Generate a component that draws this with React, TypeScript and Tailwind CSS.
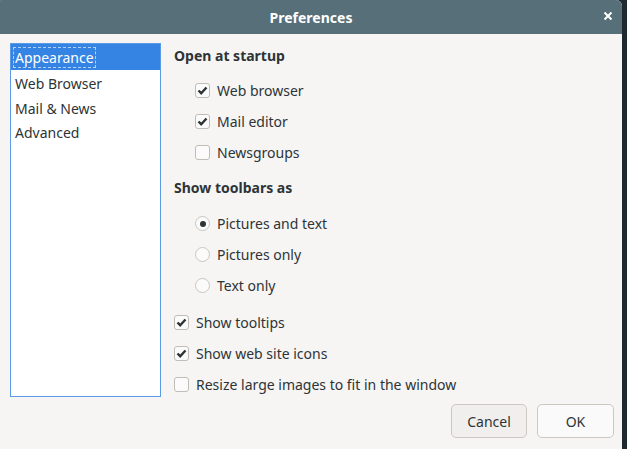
import React from "react";

function Check({ checked }: { checked: boolean }) {
  return (
    <span className="w-[15px] h-[15px] rounded-[3px] border border-[#c0bdb8] bg-[#fbfbfb] flex items-center justify-center shrink-0">
      {checked && (
        <svg width="11" height="11" viewBox="0 0 11 11">
          <path d="M1.5 5.5 L4.2 8.2 L9.5 2.5" fill="none" stroke="#2e3436" strokeWidth="2.4" />
        </svg>
      )}
    </span>
  );
}

function Radio({ checked }: { checked: boolean }) {
  return (
    <span className="w-[15px] h-[15px] rounded-full border border-[#c9c6c2] bg-[#fbfbfb] flex items-center justify-center shrink-0">
      {checked && <span className="w-[6px] h-[6px] rounded-full bg-[#2e3436]" />}
    </span>
  );
}

function Row({ children, label, indent }: { children: React.ReactNode; label: string; indent?: boolean }) {
  return (
    <div className={`flex items-center gap-[7px] h-[31px] ${indent ? "pl-[21px]" : ""}`}>
      {children}
      <span>{label}</span>
    </div>
  );
}

export default function App() {
  return (
    <div className="w-[627px] h-[449px] bg-[#1f2a30] flex text-[#2e3436] text-[14px]" style={{ fontFamily: '"Noto Sans", sans-serif' }}>
      <div className="w-[622px] h-full flex flex-col bg-[#f6f5f4] rounded-tr-[6px] rounded-tl-[2px] overflow-hidden">
        <div className="h-[34px] bg-[#566f79] flex items-center justify-center relative shrink-0">
          <span className="text-white font-bold text-[14px]">Preferences</span>
          <span className="absolute right-[9px] top-[11px] text-white">
            <svg width="10" height="10" viewBox="0 0 10 10">
              <path d="M1.5 1.5 L8.5 8.5 M8.5 1.5 L1.5 8.5" stroke="white" strokeWidth="2" />
            </svg>
          </span>
        </div>
        <div className="flex flex-1 pl-[10px] pt-[9px]">
          <div className="w-[151px] h-[354px] border border-[#5b9ae4] bg-white flex flex-col">
            <div className="h-[26px] bg-[#3584e4] text-white flex items-center pl-[2px] pt-[1px]">
              <span className="border border-dashed border-[#b8d0f0] px-[1px] leading-[19px]">Appearance</span>
            </div>
            <div className="h-[24.7px] flex items-center pl-[4px] pt-[2px]">Web Browser</div>
            <div className="h-[24.7px] flex items-center pl-[4px] pt-[2px]">Mail &amp; News</div>
            <div className="h-[24.7px] flex items-center pl-[4px] pt-[2px]">Advanced</div>
          </div>
          <div className="flex-1 flex flex-col pl-[13px]">
            <div className="font-bold h-[25px] flex items-center">Open at startup</div>
            <div className="h-[7px]" />
            <Row label="Web browser" indent><Check checked /></Row>
            <Row label="Mail editor" indent><Check checked /></Row>
            <Row label="Newsgroups" indent><Check checked={false} /></Row>
            <div className="h-[3px]" />
            <div className="font-bold h-[32px] flex items-center">Show toolbars as</div>
            <div className="h-[5px]" />
            <Row label="Pictures and text" indent><Radio checked /></Row>
            <Row label="Pictures only" indent><Radio checked={false} /></Row>
            <Row label="Text only" indent><Radio checked={false} /></Row>
            <div className="h-[6px]" />
            <Row label="Show tooltips"><Check checked /></Row>
            <Row label="Show web site icons"><Check checked /></Row>
            <Row label="Resize large images to fit in the window"><Check checked={false} /></Row>
            <div className="flex justify-end gap-[10px] pr-[8px] mt-[4px]">
              <button className="w-[76px] h-[34px] rounded-[5px] border border-[#cdc7c2] bg-[#f0efed] text-[#2e3436]">Cancel</button>
              <button className="w-[77px] h-[34px] rounded-[5px] border border-[#cdc7c2] bg-[#fafafa] text-[#2e3436]">OK</button>
            </div>
          </div>
        </div>
      </div>
    </div>
  );
}
